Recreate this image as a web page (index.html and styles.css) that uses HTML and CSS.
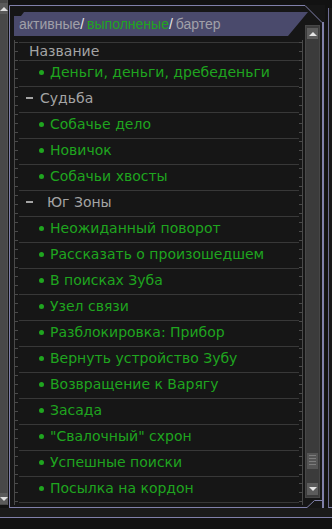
FILE: index.html
```html
<!DOCTYPE html>
<html>
<head>
  <meta charset="UTF-8">
  <title>ПДА – задания</title>
  <link rel="stylesheet" href="styles.css">
</head>
<body>
  <div class="screen">
    <div class="top">
      <div class="side">
        <span class="sbtn up"></span>
        <span class="sbtn down"></span>
      </div>
      <div class="panel">
        <svg class="frame" width="316" height="503" viewBox="0 0 316 503">
          <path d="M0.5,503 V0.5 H296 L313,17.5" fill="none" stroke="#8080aa" stroke-width="1"/>
          <path d="M314,17 V503" fill="none" stroke="#8080aa" stroke-width="2"/>
          <path d="M0,502.5 H298 L305.5,495.5 H314" fill="none" stroke="#8080aa" stroke-width="1"/>
        </svg>
        <div class="main-col">
          <div class="tab">
            <span class="grey">активные</span><span class="slash">/</span>
            <span class="green">выполненые</span><span class="slash">/</span>
            <span class="grey">бартер</span>
          </div>
          <div class="list-area">
            <div class="rail left"></div>
            <ul class="tasks">
              <li class="head first">Название</li>
              <li class="task">Деньги, деньги, дребеденьги</li>
              <li class="group">Судьба</li>
              <li class="task">Собачье дело</li>
              <li class="task">Новичок</li>
              <li class="task">Собачьи хвосты</li>
              <li class="group wide">Юг Зоны</li>
              <li class="task">Неожиданный поворот</li>
              <li class="task">Рассказать о произошедшем</li>
              <li class="task">В поисках Зуба</li>
              <li class="task">Узел связи</li>
              <li class="task">Разблокировка: Прибор</li>
              <li class="task">Вернуть устройство Зубу</li>
              <li class="task">Возвращение к Варягу</li>
              <li class="task">Засада</li>
              <li class="task">"Свалочный" схрон</li>
              <li class="task">Успешные поиски</li>
              <li class="task last">Посылка на кордон</li>
            </ul>
            <div class="rail right"></div>
          </div>
        </div>
        <div class="vscroll">
          <span class="vbtn up"></span>
          <div class="vtrack">
            <span class="thumb"></span>
          </div>
          <span class="vbtn down"></span>
        </div>
      </div>
      <div class="next"></div>
    </div>
    <div class="bottom"></div>
  </div>
</body>
</html>
```

FILE: styles.css
```css
html, body {
  margin: 0;
  padding: 0;
  background-color: #121212;
}
body {
  font-family: 'DejaVu Sans', sans-serif;
  font-size: 14px;
  color: #a4a4a4;
}
.screen {
  width: 332px;
  height: 529px;
  overflow: hidden;
}
.top {
  display: flex;
  height: 508px;
}

/* left neighbour scrollbar */
.side {
  width: 8px;
  height: 505px;
  background-color: #484848;
  border-right: 1px solid #525252;
  display: flex;
  flex-direction: column;
  justify-content: space-between;
  padding: 3px 0 1px;
  box-sizing: border-box;
}
.sbtn {
  display: block;
  width: 8px;
  height: 11px;
  background-color: #5a5a5a;
  position: relative;
}
.sbtn::after {
  content: "";
  position: absolute;
  left: 0;
  top: 4px;
  border-left: 4px solid transparent;
  border-right: 4px solid transparent;
}
.sbtn.up::after {
  border-bottom: 4px solid #e0e0e0;
}
.sbtn.down::after {
  border-top: 4px solid #e0e0e0;
}

/* main panel */
.panel {
  position: relative;
  display: flex;
  width: 316px;
  height: 503px;
  margin-top: 5px;
  margin-left: 1px;
  background-color: #161616;
}
.frame {
  position: absolute;
  left: 0;
  top: 0;
  overflow: visible;
  pointer-events: none;
}
.main-col {
  width: 291px;
  padding-left: 5px;
  display: flex;
  flex-direction: column;
}
.tab {
  flex: none;
  margin-top: 7px;
  width: 294px;
  height: 24px;
  line-height: 25px;
  padding-left: 5px;
  box-sizing: border-box;
  background-color: #4a4a6c;
  clip-path: polygon(0 4px, 7px 4px, 10px 0, 100% 0, calc(100% - 20px) 100%, 0 100%);
  white-space: nowrap;
  font-family: 'Liberation Sans', sans-serif;
  font-size: 14px;
  word-spacing: -1px;
}
.grey { color: #a0a0a8; }
.green { color: #1fa51f; }
.slash { color: #e8e8e8; }

.list-area {
  display: flex;
  margin-top: 4px;
  height: 465px;
}
.rail {
  width: 4px;
  flex: none;
  background-repeat: no-repeat;
  background-size: 3px 100%;
  background-image: repeating-linear-gradient(to bottom, transparent 0 2px, #4a4a4a 2px 3px, transparent 3px 9px);
}
.rail.left {
  border-left: 1px solid #4a4a4a;
  background-position: left top;
}
.rail.right {
  width: 3px;
  border-right: 1px solid #4a4a4a;
  background-position: right top;
}
.tasks {
  list-style: none;
  margin: 2px 0 0;
  padding: 0;
  width: 280px;
}
.tasks li {
  height: 26px;
  display: flex;
  align-items: center;
  border-top: 1px solid #383838;
  box-sizing: border-box;
  white-space: nowrap;
  padding-bottom: 4px;
}
.tasks li.first {
  height: 18px;
  padding-bottom: 1px;
}
.tasks li.last {
  border-bottom: 1px solid #383838;
  height: 27px;
}
.head {
  padding-left: 10px;
}
.group {
  padding-left: 7px;
}
.group::before {
  content: "";
  width: 7px;
  height: 2px;
  background-color: #a4a4a4;
  margin-right: 7px;
  margin-top: 1px;
}
.group.wide::before {
  margin-right: 14px;
}
.task {
  padding-left: 20px;
  color: #1fa51f;
}
.task::before {
  content: "";
  width: 5px;
  height: 5px;
  border-radius: 50%;
  background-color: #1fa51f;
  margin-right: 6px;
  margin-top: 1px;
}

/* vertical scrollbar */
.vscroll {
  margin-top: 20px;
  width: 15px;
  height: 473px;
  box-sizing: border-box;
  padding: 2px 1px;
  background-color: #3b3b3b;
  border: 1px solid #474747;
  display: flex;
  flex-direction: column;
}
.vbtn {
  display: block;
  width: 11px;
  height: 11px;
  flex: none;
  background-color: #5c5c5c;
  position: relative;
}
.vbtn::after {
  content: "";
  position: absolute;
  left: 2px;
  top: 4px;
  border-left: 4px solid transparent;
  border-right: 4px solid transparent;
}
.vbtn.up::after {
  border-bottom: 4px solid #e4e4e4;
}
.vbtn.down {
  height: 12px;
}
.vbtn.down::after {
  border-top: 4px solid #e4e4e4;
}
.vtrack {
  flex: 1;
  display: flex;
  flex-direction: column;
  justify-content: flex-end;
  padding-bottom: 14px;
}
.thumb {
  display: block;
  width: 11px;
  height: 16px;
  background-color: #555;
  background-image: repeating-linear-gradient(to bottom, transparent 0 2px, #7c7c7c 2px 3px);
  background-size: 7px 14px;
  background-position: 2px 0;
  background-repeat: no-repeat;
}

/* right neighbour panel */
.next {
  width: 3px;
  margin-left: 3px;
  margin-top: 8px;
  background-color: #181818;
  border-left: 1px solid #6e6e94;
  border-bottom: 1px solid #8080aa;
}

.bottom {
  height: 9px;
  background-color: #1b1b1b;
  border-bottom: 1px solid #8080aa;
}
```
